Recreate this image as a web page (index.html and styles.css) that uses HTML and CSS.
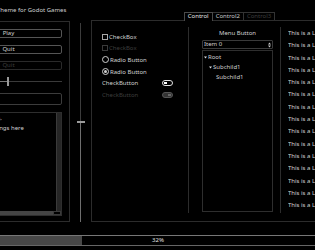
FILE: index.html
```html
<!DOCTYPE html>
<html lang="en">
<head>
    <meta charset="UTF-8">
    <meta name="viewport" content="width=device-width, initial-scale=1.0">
    <title>Dark Theme for Godot Games</title>
    <link rel="stylesheet" href="styles.css">
</head>
<body>
    <div class="app">
        <div class="main">
            <div class="left">
                <div class="title">Dark Theme for Godot Games</div>
                <div class="panel">
                    <div class="button">Play</div>
                    <div class="button">Quit</div>
                    <div class="button disabled">Quit</div>
                    <div class="hslider">
                        <div class="hs-fill"></div>
                        <div class="hs-grab"></div>
                        <div class="hs-rest"></div>
                    </div>
                    <div class="lineedit"></div>
                    <div class="textedit">
                        <div class="te-body">
                            <div class="te-text">TextEdit contro,<br>Write some things here</div>
                            <div class="te-vscroll"></div>
                        </div>
                        <div class="te-hrow">
                            <div class="te-hscroll"></div>
                            <div class="te-corner"></div>
                        </div>
                    </div>
                </div>
            </div>
            <div class="vslider">
                <div class="vs-top"></div>
                <div class="vs-grab"></div>
                <div class="vs-bottom"></div>
            </div>
            <div class="tabs">
                <div class="tabbar">
                    <span class="tab active">Control</span>
                    <span class="tab">Control2</span>
                    <span class="tab off">Control3</span>
                </div>
                <div class="tabpanel">
                    <div class="checks">
                        <div class="row"><span class="box"></span>CheckBox</div>
                        <div class="row off"><span class="box"></span>CheckBox</div>
                        <div class="row"><span class="radio"></span>Radio Button</div>
                        <div class="row"><span class="radio on"></span>Radio Button</div>
                        <div class="row between">CheckButton<span class="toggle"><span class="knob"></span></span></div>
                        <div class="row between off">CheckButton<span class="toggle"><span class="knob"></span></span></div>
                    </div>
                    <div class="vsep"></div>
                    <div class="menu">
                        <div class="menu-title">Menu Button</div>
                        <div class="option">
                            <span>Item 0</span>
                            <svg width="3" height="6" viewBox="0 0 3 6"><path d="M0 2.5 L1.5 0.5 L3 2.5 Z M0 3.5 L1.5 5.5 L3 3.5 Z" fill="#ccc"/></svg>
                        </div>
                        <div class="tree">
                            <div class="node"><svg class="arrow" width="3" height="3" viewBox="0 0 3 3"><path d="M0 0.5 H3 L1.5 2.5 Z" fill="#ddd"/></svg>Root</div>
                            <div class="node sub"><svg class="arrow" width="3" height="3" viewBox="0 0 3 3"><path d="M0 0.5 H3 L1.5 2.5 Z" fill="#ddd"/></svg>Subchild1</div>
                            <div class="node leaf">Subchild1</div>
                        </div>
                    </div>
                    <div class="vsep second"></div>
                    <div class="labels">
                        <div>This is a Label</div>
                        <div>This is a Label</div>
                        <div>This is a Label</div>
                        <div>This is a Label</div>
                        <div>This is a Label</div>
                        <div>This is a Label</div>
                        <div>This is a Label</div>
                        <div>This is a Label</div>
                        <div>This is a Label</div>
                        <div>This is a Label</div>
                        <div>This is a Label</div>
                        <div>This is a Label</div>
                        <div>This is a Label</div>
                        <div>This is a Label</div>
                        <div>This is a Label</div>
                        <div>This is a Label</div>
                    </div>
                </div>
            </div>
        </div>
        <div class="progress">
            <div class="pfill" style="width: 32%"></div>
            <span class="ptext">32%</span>
        </div>
    </div>
</body>
</html>
```

FILE: styles.css
```css
body,html{
    margin: 0;
    padding: 0;
    background: #000;
    overflow: hidden;
}
body{
    font-family: "Noto Sans", sans-serif;
    font-size: 6px;
    color: #d0d0d0;
}
.app{
    width: 420px;
    margin-left: -52px;
    display: flex;
    flex-direction: column;
}
.main{
    display: flex;
    height: 222px;
}

/* left column */
.left{
    width: 122px;
    display: flex;
    flex-direction: column;
}
.title{
    height: 21px;
    box-sizing: border-box;
    padding: 6px 0 0 34px;
    line-height: 8px;
    white-space: nowrap;
}
.panel{
    flex: 1;
    border: 1px solid #2c2c2c;
    border-left: none;
    padding: 7px 7px 0 7px;
    display: flex;
    flex-direction: column;
    gap: 7px;
}
.button{
    height: 9px;
    box-sizing: border-box;
    border: 1px solid #555;
    border-radius: 2px;
    line-height: 7px;
    text-align: center;
}
.button.disabled{
    border-color: #2a2a2a;
    color: #3c3c3c;
}
.hslider{
    height: 9px;
    display: flex;
    align-items: center;
}
.hs-fill{
    width: 52px;
    height: 1px;
    background: #777;
}
.hs-grab{
    width: 2px;
    height: 9px;
    background: #9a9a9a;
}
.hs-rest{
    flex: 1;
    height: 1px;
    background: #3a3a3a;
}
.lineedit{
    height: 12px;
    box-sizing: border-box;
    border: 1px solid #3c3c3c;
    border-radius: 2px;
}
.textedit{
    height: 104px;
    box-sizing: border-box;
    border: 1px solid #2e2e2e;
    display: flex;
    flex-direction: column;
}
.te-body{
    flex: 1;
    display: flex;
    overflow: hidden;
}
.te-text{
    flex: 1;
    padding-left: 2px;
    line-height: 10px;
    white-space: nowrap;
    overflow: hidden;
}
.te-vscroll{
    width: 4px;
    border-left: 1px solid #3a3a3a;
    background: #262626;
}
.te-hrow{
    height: 4px;
    display: flex;
}
.te-hscroll{
    flex: 1;
    background: #444;
}
.te-corner{
    width: 6px;
    border: 1px solid #3a3a3a;
}

/* vertical slider */
.vslider{
    width: 21px;
    padding-top: 23px;
    display: flex;
    flex-direction: column;
    align-items: center;
}
.vs-top{
    width: 1px;
    height: 98px;
    background: #3c3c3c;
}
.vs-grab{
    width: 8px;
    height: 2px;
    background: #9a9a9a;
}
.vs-bottom{
    flex: 1;
    width: 1px;
    background: #6e6e6e;
}

/* tabs */
.tabs{
    flex: 1;
    display: flex;
    flex-direction: column;
}
.tabbar{
    height: 20px;
    display: flex;
    justify-content: center;
    align-items: flex-end;
}
.tab{
    height: 8px;
    box-sizing: border-box;
    border-top: 1px solid #333;
    border-right: 1px solid #333;
    padding: 0 3px;
    line-height: 7px;
    color: #c8c8c8;
}
.tab.active{
    border-left: 1px solid #4a4a4a;
    border-top-color: #4a4a4a;
    border-right-color: #4a4a4a;
    height: 9px;
    margin-bottom: -1px;
    background: #000;
    position: relative;
    color: #e6e6e6;
}
.tab.off{
    color: #3e3e3e;
}
.tabpanel{
    flex: 1;
    border: 1px solid #2c2c2c;
    padding: 6px 0 0 10px;
    display: flex;
    align-items: flex-start;
}

.checks{
    width: 71px;
    padding-top: 4px;
}
.row{
    height: 11.6px;
    display: flex;
    align-items: center;
    white-space: nowrap;
}
.row.between{
    justify-content: space-between;
}
.row.off{
    color: #3e3e3e;
}
.box{
    width: 6px;
    height: 6px;
    box-sizing: border-box;
    border: 1px solid #a8a8a8;
    margin-right: 1px;
}
.row.off .box{
    border-color: #3a3a3a;
}
.radio{
    width: 7px;
    height: 7px;
    box-sizing: border-box;
    border: 1px solid #d0d0d0;
    border-radius: 50%;
    margin-right: 1px;
    display: flex;
    align-items: center;
    justify-content: center;
}
.radio.on::after{
    content: "";
    width: 3px;
    height: 3px;
    border-radius: 50%;
    background: #d0d0d0;
}
.toggle{
    width: 11px;
    height: 6px;
    box-sizing: border-box;
    border: 1px solid #e0e0e0;
    border-radius: 3px;
    padding: 1px;
    display: flex;
}
.toggle .knob{
    width: 3px;
    height: 2px;
    background: #fff;
}
.row.off .toggle{
    border-color: #555;
    background: #333;
    justify-content: flex-end;
}
.row.off .knob{
    background: #666;
}

.vsep{
    width: 1px;
    height: 186px;
    background: #2c2c2c;
    margin-left: 15px;
}
.vsep.second{
    margin-left: 7px;
}

.menu{
    width: 71px;
    margin-left: 13px;
}
.menu-title{
    height: 12px;
    line-height: 12px;
    text-align: center;
}
.option{
    margin-top: 1px;
    height: 9px;
    box-sizing: border-box;
    border: 1px solid #3a3a3a;
    border-radius: 1px;
    padding: 0 1px;
    display: flex;
    align-items: center;
    justify-content: space-between;
    line-height: 7px;
}
.tree{
    margin-top: 1px;
    height: 162px;
    box-sizing: border-box;
    border: 1px solid #2e2e2e;
    padding: 1px 0 0 1px;
}
.node{
    height: 10px;
    display: flex;
    align-items: center;
    white-space: nowrap;
}
.arrow{
    margin-right: 1px;
}
.node.sub{
    padding-left: 5px;
}
.node.leaf{
    padding-left: 12px;
}

.labels{
    flex: 1;
    margin-left: 7px;
    height: 188px;
    overflow: hidden;
    line-height: 12.3px;
    white-space: nowrap;
}

/* progress */
.progress{
    margin-top: 13px;
    height: 11px;
    box-sizing: border-box;
    border-top: 1px solid #777;
    border-bottom: 1px solid #666;
    position: relative;
}
.pfill{
    height: 100%;
    background: #474747;
}
.ptext{
    position: absolute;
    left: 0;
    right: 0;
    top: 0;
    text-align: center;
    line-height: 9px;
    color: #e0e0e0;
}
```
